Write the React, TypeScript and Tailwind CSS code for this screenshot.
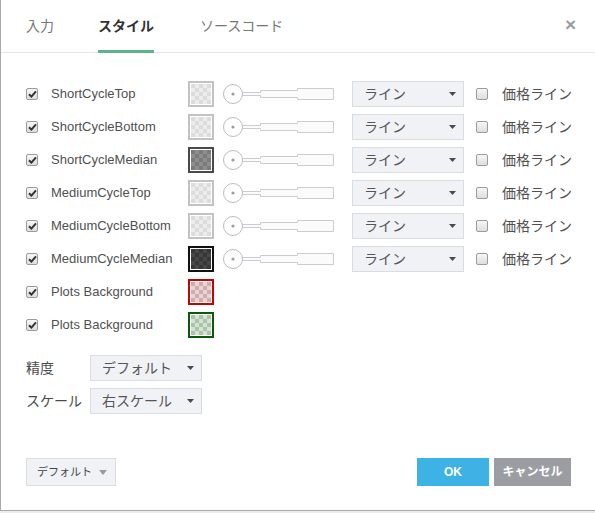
import { useId } from "react";

const FONT = { fontFamily: '"Liberation Sans", "Noto Sans CJK JP", sans-serif' };

type Row = { name: string; border: string; a: string; b: string; slider: boolean };

const ROWS: Row[] = [
  { name: "ShortCycleTop", border: "#c2c2c2", a: "#ececec", b: "#dcdcdc", slider: true },
  { name: "ShortCycleBottom", border: "#c2c2c2", a: "#ececec", b: "#dcdcdc", slider: true },
  { name: "ShortCycleMedian", border: "#4a4a4a", a: "#8e8e8e", b: "#7b7b7b", slider: true },
  { name: "MediumCycleTop", border: "#c2c2c2", a: "#ececec", b: "#dcdcdc", slider: true },
  { name: "MediumCycleBottom", border: "#c2c2c2", a: "#ececec", b: "#dcdcdc", slider: true },
  { name: "MediumCycleMedian", border: "#111111", a: "#474747", b: "#363636", slider: true },
  { name: "Plots Background", border: "#cc0000", a: "#ecd3d3", b: "#cdadad", slider: false },
  { name: "Plots Background", border: "#0b5a0b", a: "#d3e4d3", b: "#abc2ab", slider: false },
];

function Check({ on }: { on: boolean }) {
  return (
    <span className="flex h-3 w-3 items-center justify-center rounded-[2px] border border-[#9b9b9b] bg-[linear-gradient(#f6f6f6,#dedede)]">
      {on && (
        <svg width="9" height="8" viewBox="0 0 9 8">
          <path d="M1 4.2 L3.4 6.6 L8 1.4" fill="none" stroke="#333" strokeWidth="2" />
        </svg>
      )}
    </span>
  );
}

function Swatch({ border, a, b }: { border: string; a: string; b: string }) {
  const id = useId();
  return (
    <span className="block h-[26px] w-[26px] border-2 bg-white p-px" style={{ borderColor: border }}>
      <svg width="20" height="20" className="block">
        <defs>
          <pattern id={id} width="8" height="8" patternUnits="userSpaceOnUse">
            <rect width="8" height="8" fill={a} />
            <rect width="4" height="4" fill={b} />
            <rect x="4" y="4" width="4" height="4" fill={b} />
          </pattern>
        </defs>
        <rect width="20" height="20" fill={`url(#${id})`} />
      </svg>
    </span>
  );
}

function Slider() {
  return (
    <svg width="114" height="22" viewBox="0 0 114 22" className="block">
      <path
        d="M20 9.5 H38.5 V7.5 H75.5 V5.5 H111.5 V16.5 H75.5 V14.5 H38.5 V12.5 H20"
        fill="#fbfbfb"
        stroke="#c9cdd3"
      />
      <circle cx="11" cy="11" r="9.5" fill="#fff" stroke="#b9bdc4" />
      <circle cx="11" cy="11" r="1.6" fill="#9a9ea6" />
    </svg>
  );
}

function Select({ label, w }: { label: string; w: string }) {
  return (
    <div className={`flex h-[26px] ${w} items-center justify-between border border-[#d9dce2] bg-[#f0f2f6] pl-[11px] pr-[7px] text-[14px] text-[#555]`}>
      <span>{label}</span>
      <svg width="7" height="4" viewBox="0 0 7 4">
        <path d="M0 0 H7 L3.5 4 Z" fill="#4a4a4a" />
      </svg>
    </div>
  );
}

export default function App() {
  return (
    <div className="h-[513px] w-[595px] overflow-hidden bg-[#ececec]" style={FONT}>
      <div className="flex h-[511px] w-[600px] flex-col border-b border-l border-[#a9a9a9] bg-white">
        {/* tabs */}
        <div className="flex h-[53px] items-center border-b border-[#e1e4e8] pl-[25px] pr-[24px]">
          <div className="flex h-full gap-[44px] text-[14px]">
            <div className="flex items-center text-[#777]">入力</div>
            <div className="relative flex items-center font-bold text-[#333]">
              スタイル
              <span className="absolute bottom-[-1px] left-0 right-0 h-[3px] bg-[#5bb58a]" />
            </div>
            <div className="flex items-center pl-[2px] text-[#777]">ソースコード</div>
          </div>
          <div className="mb-[4px] ml-auto text-[19px] font-bold leading-none text-[#9a9ca2]">×</div>
        </div>

        <div className="flex flex-1 flex-col pl-[25px] pt-[28px]">
          <div className="flex flex-col gap-[7px]">
            {ROWS.map((r, i) => (
              <div key={i} className="flex h-[26px] items-center text-[13px] text-[#505050]">
                <span className="w-[25px]">
                  <Check on />
                </span>
                <span className="w-[137px]">{r.name}</span>
                <Swatch border={r.border} a={r.a} b={r.b} />
                {r.slider && (
                  <>
                    <span className="ml-[8px]">
                      <Slider />
                    </span>
                    <span className="ml-[16px]">
                      <Select label="ライン" w="w-[112px]" />
                    </span>
                    <span className="ml-[12px] w-[26px]">
                      <Check on={false} />
                    </span>
                    <span className="text-[14px]">価格ライン</span>
                  </>
                )}
              </div>
            ))}
          </div>

          <div className="mt-[17px] flex flex-col gap-[7px] text-[14px] text-[#4a4a4a]">
            <div className="flex items-center">
              <span className="w-[64px]">精度</span>
              <Select label="デフォルト" w="w-[112px]" />
            </div>
            <div className="flex items-center">
              <span className="w-[64px]">スケール</span>
              <Select label="右スケール" w="w-[112px]" />
            </div>
          </div>

          <div className="mt-[44px] flex items-center pr-[29px]">
            <div className="flex h-[28px] w-[90px] items-center border border-[#d9dce2] bg-[#f0f2f6] pl-[10px] text-[11px] text-[#444]">
              デフォルト
              <svg width="8" height="5" viewBox="0 0 8 5" className="ml-[7px]">
                <path d="M0 0 H8 L4 5 Z" fill="#9a9a9a" />
              </svg>
            </div>
            <div className="ml-auto flex h-[28px] w-[72px] items-center justify-center bg-[#3cb3e4] text-[12px] font-bold text-white">
              OK
            </div>
            <div className="ml-[5px] flex h-[28px] w-[77px] items-center justify-center bg-[#9b9da3] text-[12px] font-bold text-white">
              キャンセル
            </div>
          </div>
        </div>
      </div>
    </div>
  );
}
